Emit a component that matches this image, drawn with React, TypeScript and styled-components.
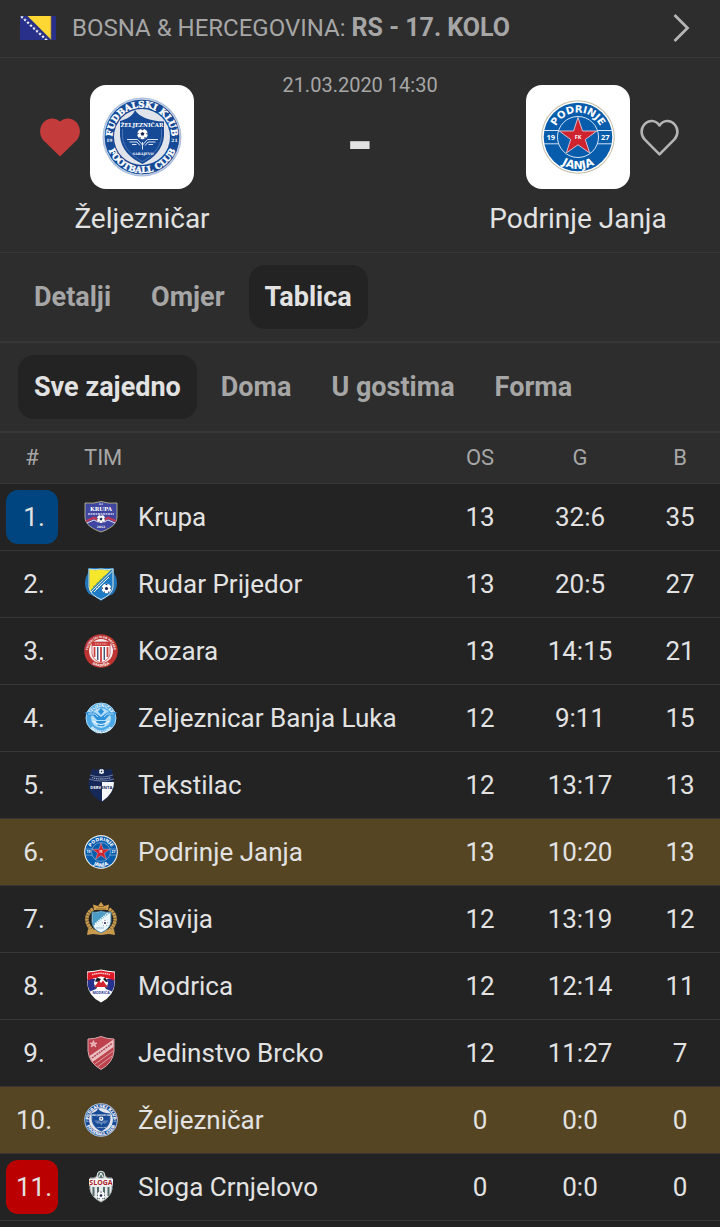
import { useId, useState } from "react";
import type { ReactNode } from "react";
import styled, { createGlobalStyle, css } from "styled-components";

const color = {
  panel: "#2d2d2d",
  body: "#232323",
  line: "#373737",
  text: "#e2e2e2",
  muted: "#a6a6a6",
  highlight: "#554522",
  promotion: "#00457f",
  relegation: "#ba0000",
  heart: "#c43b3b",
};

const GlobalStyle = createGlobalStyle`
  *, *::before, *::after { box-sizing: border-box; }
  body {
    margin: 0;
    background: ${color.body};
    color: ${color.text};
    font-family: Roboto, "Liberation Sans", sans-serif;
  }
  button { font: inherit; color: inherit; border: 0; padding: 0; background: none; cursor: pointer; }
`;

const Page = styled.main`
  width: 100%;
`;

const LeagueLink = styled.a`
  display: flex;
  align-items: center;
  gap: 16px;
  height: 58px;
  padding: 0 30px 2px 20px;
  border-bottom: 1px solid ${color.line};
  background: ${color.panel};
  color: ${color.muted};
  font-size: 24px;
  line-height: 32px;
  text-transform: uppercase;
  text-decoration: none;
  svg { flex: none; }
`;

const LeagueName = styled.span`
  flex: 1;
  white-space: nowrap;
  b { font-size: 25px; font-weight: 700; }
`;

const MatchHeader = styled.header`
  display: grid;
  grid-template-columns: minmax(0, 1fr) 152px minmax(0, 1fr);
  height: 195px;
  padding-top: 27px;
  border-bottom: 1px solid ${color.line};
  background: ${color.panel};
`;

const Team = styled.section`
  display: grid;
  grid-template-columns: 1fr 104px 1fr;
  grid-template-rows: 104px 32px;
  align-content: start;
  align-items: center;
  column-gap: 10px;
  row-gap: 14px;
`;

const TeamLogo = styled.div`
  grid-column: 2;
  grid-row: 1;
  display: grid;
  place-items: center;
  height: 104px;
  border-radius: 16px;
  background: #fff;
`;

const FavouriteButton = styled.button<{ $side: "left" | "right" }>`
  grid-column: ${(p) => (p.$side === "left" ? 1 : 3)};
  grid-row: 1;
  justify-self: ${(p) => (p.$side === "left" ? "end" : "start")};
  display: block;
  line-height: 0;
`;

const TeamName = styled.h2`
  grid-column: 1 / -1;
  margin: 0;
  text-align: center;
  font-size: 28px;
  font-weight: 400;
  line-height: 32px;
`;

const MatchCentre = styled.div`
  display: flex;
  flex-direction: column;
  align-items: center;
  margin-top: -12px;
`;

const Kickoff = styled.time`
  color: ${color.muted};
  font-size: 20px;
  line-height: 24px;
  white-space: nowrap;
`;

const Score = styled.span`
  margin-top: 10px;
  font-size: 70px;
  font-weight: 700;
  line-height: 72px;
`;

const TabBar = styled.nav`
  display: flex;
  gap: 8px;
  height: 90px;
  padding: 12px 18px;
  border-bottom: 2px solid ${color.line};
  background: ${color.panel};
`;

const Tab = styled.button<{ $active: boolean }>`
  height: 64px;
  padding: 0 16px;
  border-radius: 16px;
  color: ${color.muted};
  font-size: 27px;
  font-weight: 700;
  line-height: 32px;
  white-space: nowrap;
  ${(p) => p.$active && css`background: ${color.body}; color: ${color.text};`}
`;

const Standings = styled.table`
  width: 100%;
  table-layout: fixed;
  border-collapse: separate;
  border-spacing: 0;
  font-size: 26px;
  line-height: 32px;
`;

const HeadCell = styled.th<{ $width?: number; $align?: "left" | "center"; $pad?: number }>`
  width: ${(p) => (p.$width ? `${p.$width}px` : "auto")};
  height: 51px;
  padding: 0 0 0 ${(p) => p.$pad ?? 0}px;
  border-bottom: 1px solid ${color.line};
  background: ${color.panel};
  color: ${color.muted};
  font-size: 22px;
  font-weight: 400;
  text-align: ${(p) => p.$align ?? "center"};
`;

const Row = styled.tr<{ $highlight: boolean }>`
  background: ${(p) => (p.$highlight ? color.highlight : color.body)};
`;

const Cell = styled.td<{ $pad?: number }>`
  height: 67px;
  padding: 0 0 0 ${(p) => p.$pad ?? 0}px;
  border-bottom: 1px solid ${color.line};
  text-align: center;
  white-space: nowrap;
`;

const Rank = styled.span<{ $background?: string }>`
  display: flex;
  align-items: center;
  justify-content: center;
  width: 52px;
  height: 54px;
  margin: 0 auto;
  padding-left: 4px;
  border-radius: 12px;
  background: ${(p) => p.$background ?? "transparent"};
`;

const Club = styled.span`
  display: flex;
  align-items: center;
  gap: 20px;
  svg { flex: none; }
`;

const SERIF = '"DejaVu Serif", serif';
const SANS = '"Open Sans", sans-serif';
const WIDE = '"DejaVu Sans", sans-serif';

function Flag() {
  const stars = Array.from({ length: 9 }, (_, i) => i);
  return (
    <svg width="36" height="24" viewBox="0 0 36 24" aria-hidden="true">
      <rect width="36" height="24" fill="#29308a" />
      <path d="M7.5 0H31V23.6Z" fill="#fdd835" />
      <path d="M31.200 0V24" stroke="#6b5a55" strokeWidth=".8" />
      {stars.map((i) => (
        <path
          key={i}
          transform={`translate(${2 + i * 3} ${1 + i * 2.8})`}
          d="M0-1.8.5-.5 1.8-.4.8.5 1.1 1.7 0 1-1.1 1.7-.8.5-1.8-.4-.5-.5Z"
          fill="#f2f3fa"
        />
      ))}
    </svg>
  );
}

function Heart({ filled }: { filled: boolean }) {
  return (
    <svg width="40" height="40" viewBox="0 0 40 40" aria-hidden="true">
      {filled ? (
        <path d="M20 39.500 3.600 23.500C-1 18.800-1.100 10.300 3.400 5.400 7.900.5 15.300.2 20 4.500 24.700.2 32.100.5 36.600 5.400 41.100 10.300 41 18.800 36.400 23.500Z" fill={color.heart} />
      ) : (
        <path
          d="M19.500 37.300 4.600 22.300C.7 18.300.6 11.800 4.300 7.500 8.500 2.700 15.700 2.800 19.500 8.500 23.300 2.800 30.500 2.700 34.700 7.500 38.400 11.800 38.300 18.300 34.400 22.300Z"
          fill="none"
          stroke="#b4b4b4"
          strokeWidth="2.600"
          strokeLinejoin="round"
        />
      )}
    </svg>
  );
}

function Chevron() {
  return (
    <svg width="18" height="30" viewBox="0 0 18 30" fill="none" aria-hidden="true">
      <path d="M2.500 2 15.500 15 2.500 28" stroke="#b4b4b4" strokeWidth="2.800" />
    </svg>
  );
}

function Ball({ x, y, r }: { x: number; y: number; r: number }) {
  return (
    <g transform={`translate(${x} ${y}) scale(${r / 5})`}>
      <circle r="5" fill="#fff" />
      <path d="M0-1.900 1.800-.6 1.100 1.500H-1.100L-1.800-.6Z" fill="#1b2b55" />
      <path d="M-1.500-4.700H1.500L0-3.400ZM4.800-1.300 4.900 1 3.400-.6ZM-4.800-1.300-4.900 1-3.400-.6ZM3.400 3.600 1.600 4.700 1.900 2.800ZM-3.400 3.600-1.600 4.700-1.900 2.800Z" fill="#1b2b55" />
    </g>
  );
}

function ZeljeznicarCrest({ size }: { size: number }) {
  const id = useId();
  return (
    <svg width={size} height={size} viewBox="0 0 80 80" aria-hidden="true">
      <defs>
        <path id={`${id}t`} d="M10.500 40A29.500 29.500 0 0 1 69.500 40" />
        <path id={`${id}b`} d="M4 40A36 36 0 0 0 76 40" />
      </defs>
      <circle cx="40" cy="40" r="39.500" fill="#a9bddb" />
      <circle cx="40" cy="40" r="37.800" fill="#174a96" stroke="#fff" strokeWidth=".6" />
      <circle cx="40" cy="40" r="28" fill="#e1e4ea" />
      <path d="M33 13C37 20 48 24 62 24.500V39C61 52 52 61 40.500 67 28 61 19 52 18 39V24C25 22 31 19 33 13Z" fill="#174a96" />
      <path d="M20.500 32V40C21.500 51 30 59 40.500 64.500 50 59 58.500 51 59.500 40V32" fill="none" stroke="#6e90c4" strokeWidth=".6" />
      <g fill="#fff" fontWeight="700" textAnchor="middle" fontFamily={SERIF}>
        <g fontSize="8.800" stroke="#fff" strokeWidth=".4">
          <text><textPath href={`#${id}t`} startOffset="50%">FUDBALSKI KLUB</textPath></text>
          <text><textPath href={`#${id}b`} startOffset="50%">FOOTBALL CLUB</textPath></text>
        </g>
        <text x="40" y="29.800" fontSize="5.400">ŽELJEZNIČAR</text>
        <text x="41" y="58" fontSize="3.500">SARAJEVO</text>
        <text x="7.300" y="45" fontSize="4.500">19</text>
        <text x="72.500" y="45" fontSize="4.500">21</text>
      </g>
      <Ball x={40.500} y={37} r={5.300} />
      <path d="M25 42.500H35.500L40.500 48 45.500 42.500H56M27.500 45H35L38 48.500M53.500 45H46L43 48.500M30 47.500H34.500M51 47.500H46.500M40.500 45V52.500" fill="none" stroke="#dbe4f2" strokeWidth="1" />
    </svg>
  );
}

function PodrinjeCrest({ size }: { size: number }) {
  const id = useId();
  return (
    <svg width={size} height={size} viewBox="0 0 74 74" aria-hidden="true">
      <defs>
        <path id={`${id}t`} d="M12.500 37A24.500 24.500 0 0 1 61.500 37" />
        <path id={`${id}b`} d="M5 37A32 32 0 0 0 69 37" />
      </defs>
      <circle cx="37" cy="37" r="36.800" fill="#c5bda9" />
      <circle cx="37" cy="37" r="35.800" fill="#fff" />
      <circle cx="37" cy="37" r="34.300" fill="#075cac" />
      <path d="M3 30.500H71M3 43.800H71" stroke="#d3e3f4" />
      <circle cx="37" cy="37" r="20.500" fill="#075cac" stroke="#d3e3f4" />
      <path d="M37 17.500 41.500 31H55.800L44.300 39.500 48.700 53 37 44.800 25.300 53 29.700 39.500 18.200 31H32.500Z" fill="#cf2330" stroke="#e4cbd6" strokeWidth=".9" />
      <g fill="#fff" fontWeight="700" textAnchor="middle">
        <g fontFamily={WIDE}>
          <text fontSize="10"><textPath href={`#${id}t`} startOffset="50%">PODRINJE</textPath></text>
          <text fontSize="11"><textPath href={`#${id}b`} startOffset="50%">JANJA</textPath></text>
        </g>
        <g fontFamily={SANS}>
          <text x="9.800" y="39.800" fontSize="7.500">19</text>
          <text x="64.200" y="39.800" fontSize="7.500">27</text>
          <text x="37" y="39.300" fontSize="5.500">FK</text>
        </g>
      </g>
    </svg>
  );
}

function Crest({ children }: { children: ReactNode }) {
  return (
    <svg width="34" height="34" viewBox="0 0 34 34" aria-hidden="true">
      {children}
    </svg>
  );
}

function KrupaCrest() {
  return (
    <Crest>
      <path d="M1 3Q9 4 17 1.500 25 4 33 3V17C33 25 25 29 17 32 9 29 1 25 1 17Z" fill="#4046a0" stroke="#aaa98e" />
      <g fill="#fff" fontWeight="700" textAnchor="middle" fontFamily={SERIF}>
        <text x="17" y="11" fontSize="5.500">KRUPA</text>
        <text x="17" y="27.500" fontSize="3">2012</text>
      </g>
      <path d="M4 14H30M15 4.200H19" stroke="#c9cbea" strokeWidth="1.300" strokeDasharray="2 .5" />
      <path d="M2 20 10 16.500 17 20 24 16.500 32 20V22L24 19 17 23 10 19 2 22Z" fill="#c43750" />
      <path d="M3 23 10 20 14 22M31 23 24 20 20 22" stroke="#dfe0f2" fill="none" />
      <Ball x={17} y={19} r={4} />
    </Crest>
  );
}

function RudarCrest() {
  return (
    <Crest>
      <path d="M4 1 30 1Q29 6 32 10 35 20 29 27 23 29 17 34 11 29 5 27-1 20 2 10 5 6 4 1Z" fill="#2374b7" />
      <path d="M5 2Q11 3.500 17 2 23 3.500 29 2V20Q28 28 17 32.500 6 28 5 20Z" fill="#1e7bc5" stroke="#d5e7e6" />
      <path d="M5.500 2.500Q11 4 17 2.500 22 4 27 2.800L6 24Q5.500 22 5.500 20Z" fill="#f5e82c" />
      <path d="M7 25 28.500 4M10 25 25 10" stroke="#f3f4d2" strokeWidth="1" />
      <path d="M9 20 21 8.500" stroke="#4f7960" strokeDasharray="1 1" />
      <path d="M12 22 20 15" stroke="#d8e8f4" strokeDasharray="1.500 1" />
      <Ball x={22.500} y={21.500} r={4.800} />
    </Crest>
  );
}

function KozaraCrest() {
  const id = useId();
  return (
    <Crest>
      <defs>
        <path id={`${id}t`} d="M4 17A13 13 0 0 1 30 17" />
        <path id={`${id}b`} d="M1.500 17A15.500 15.500 0 0 0 32.500 17" />
      </defs>
      <circle cx="17" cy="17" r="16.800" fill="#bd3433" />
      <circle cx="17" cy="17" r="12" fill="#f5eeee" />
      <g fill="#fff" fontWeight="700" textAnchor="middle" fontFamily={SANS} fontSize="3.600">
        <text fontSize="3"><textPath href={`#${id}t`} startOffset="50%">FUDBALSKI KLUB KOZARA</textPath></text>
        <text><textPath href={`#${id}b`} startOffset="50%">GRADIŠKA</textPath></text>
      </g>
      <path d="M8 8H26V20Q25 26 17 29 9 26 8 20Z" fill="#fff" stroke="#c74140" strokeWidth=".8" />
      <path d="M8 8H26V12H8Z" fill="#c93b3a" />
      <path d="M10.500 13V23M17 13V28M23.500 13V23" stroke="#ca3e3c" strokeWidth="1.800" />
      <path d="M13.700 13V26M20.300 13V26" stroke="#435879" strokeWidth="1.500" />
      <path d="M11 10H23" stroke="#f0b8b7" strokeDasharray="1.500 .8" />
    </Crest>
  );
}

function BanjaLukaCrest() {
  const id = useId();
  return (
    <Crest>
      <defs>
        <path id={`${id}t`} d="M6 17A11 11 0 0 1 28 17" />
        <path id={`${id}b`} d="M3 18A14 14 0 0 0 31 18" />
      </defs>
      <circle cx="17" cy="17" r="15" fill="#4ba7e5" stroke="#a9dbf8" />
      <circle cx="17" cy="17" r="10" fill="#b4def6" />
      <g fill="#fff" fontWeight="700" textAnchor="middle" fontFamily={SANS} fontSize="4">
        <text><textPath href={`#${id}t`} startOffset="50%">ŽELJEZNIČAR</textPath></text>
        <text><textPath href={`#${id}b`} startOffset="50%">BANJA LUKA</textPath></text>
      </g>
      <path d="M.5 11.500H11L17 16 23 11.500H33.500L30 14.500H25L21 19H13L9 14.500H4Z" fill="#2c91db" />
      <path d="M4 13H11L14 16M30 13H23L20 16" stroke="#d9effc" fill="none" strokeWidth=".8" />
      <path d="M14 10.500 17 7 20 10.500 17 14ZM12 20H22L20 25H14Z" fill="#2c91db" />
      <path d="M9 20Q17 27 25 20" stroke="#fff" fill="none" />
    </Crest>
  );
}

function TekstilacCrest() {
  return (
    <Crest>
      <path d="M8 1 13 2 17 0 21 2 28 1 29 12Q32 25 18 34 2 25 5 12Z" fill="#162858" />
      <path d="M18 14H30Q30.500 25 18 33.500Z" fill="#f4f6fa" />
      <path d="M6 7Q17 11 29 7M5 11Q17 15 30 11" stroke="#8290b2" strokeWidth=".8" fill="none" />
      <path d="M8 9.500Q17 12.500 27 9.500" stroke="#a3adca" strokeWidth="1.300" strokeDasharray="1.300 .8" fill="none" />
      <Ball x={17.500} y={3.500} r={2.500} />
      <text x="17.300" y="20.500" textAnchor="middle" fontFamily={SANS} fontWeight="700" fontSize="4.200">
        <tspan fill="#fff">DERV</tspan>
        <tspan fill="#162858">ENTA</tspan>
      </text>
    </Crest>
  );
}

function SlavijaCrest() {
  return (
    <Crest>
      <path d="M9 7Q1 12 3.500 21 6 28 12 30M25 7Q33 12 30.500 21 28 28 22 30" fill="none" stroke="#c79a4d" strokeWidth="3.600" strokeDasharray="2.500 .4" />
      <path d="M4 27 10 28 17 30 24 28 30 27 31 33 25 32 17 33 9 32 3 33Z" fill="#c79a4d" />
      <path d="M10 8 9 2.500 14 4 17 0 20 4 25 2.500 24 8Z" fill="#cf9f4d" />
      <path d="M12 7H22M14 4.500H20" stroke="#815d25" strokeWidth=".8" />
      <path d="M8 10Q12 11 17 9 22 11 27 10V20Q26 27 17 31 8 27 8 20Z" fill="#eaf5fa" stroke="#467f9b" />
      <path d="M8.500 10.500Q12 11.500 17 9.500 22 11.500 26.500 10.500L9 24Z" fill="#4a9cc7" />
      <path d="M11 22 24 11" stroke="#fff" strokeWidth="1.500" strokeDasharray="1.500 .7" />
      <Ball x={21} y={21} r={3} />
      <path d="M12 26H20" stroke="#94bfd5" />
    </Crest>
  );
}

function ModricaCrest() {
  return (
    <Crest>
      <path d="M3 2.500Q11 2 17 .5 23 2 31 2.500V14Q30 27 17 33.500 4 27 3 14Z" fill="#fff" />
      <path d="M3.500 10 30.500 10V15Q30 19 28 22.500L22 20H12L6 22.500Q4 19 3.500 15Z" fill="#26318d" />
      <path d="M3.500 3.500Q11 3 17 1.500 23 3 30.500 3.500V11.500Q23 8.500 17 8.500 11 8.500 3.500 11.500Z" fill="#df1826" />
      <path d="M8 5.500Q17 3.200 26 5.500" stroke="#ffd6d7" fill="none" strokeWidth="1.500" strokeDasharray="1.500 .6" />
      <circle cx="17" cy="14.500" r="7" fill="#fff" />
      <path d="M13 8.500 17 10 15 13 11 12.500ZM21 8.500 19 10 22 13 24 12.500ZM10 15 13 18 12 20ZM24 15 21 18 22 20Z" fill="#191b27" />
      <path d="M10.500 18 15 11.500 17 14 19 11.500 23.500 18Z" fill="#d52431" />
      <text x="17" y="25" fontSize="3.600" fontWeight="700" textAnchor="middle" fontFamily={SANS} fill="#26318d">MODRIČA</text>
    </Crest>
  );
}

function JedinstvoCrest() {
  return (
    <Crest>
      <path d="M4 3Q11 3 17 .5 23 3 30 3V15Q29 27 17 33.500 5 27 4 15Z" fill="#be424e" stroke="#dba8ad" />
      <path d="M5.500 20 29.500 3.500V11L8.500 26Z" fill="#e9bfc2" />
      <path d="M8 22 28 7.500" stroke="#b24651" strokeWidth="1.500" strokeDasharray="2 .8" />
      <path d="M11 28 29 15M14 30.500 28 20" stroke="#daa0a5" />
      <path d="M9.500 4.500 10.500 7H13L11 8.500 12 11 9.500 9.500 7 11 8 8.500 6 7H8.500Z" fill="#e7a5aa" stroke="#fff" strokeWidth=".4" />
    </Crest>
  );
}

function SlogaCrest() {
  return (
    <Crest>
      <path d="M6 8Q11 9 13 6L14 3Q17 0 20 3L21 6Q23 9 28 8V19Q27 27 17 32 7 27 6 19Z" fill="#e6eaea" stroke="#a4adae" />
      <path d="M9.500 17V26M14 17V29M20 17V29M24.500 17V26" stroke="#55696a" strokeWidth="2" />
      <circle cx="17" cy="5" r="3.800" fill="#5c7270" stroke="#d9e2e1" />
      <path d="M15 7 17 3 19 7" stroke="#fff" fill="none" />
      <rect x="5" y="9" width="24" height="6.500" fill="#f7f5f5" />
      <text x="17" y="14.800" fontSize="7" fontWeight="700" textAnchor="middle" fontFamily={SANS} fill="#a91f2c">SLOGA</text>
      <Ball x={17} y={25.500} r={4} />
    </Crest>
  );
}

interface Standing {
  name: string;
  crest: ReactNode;
  played: number;
  goals: string;
  points: number;
  highlight?: boolean;
  rankColor?: string;
}

const standings: Standing[] = [
  { name: "Krupa", crest: <KrupaCrest />, played: 13, goals: "32:6", points: 35, rankColor: color.promotion },
  { name: "Rudar Prijedor", crest: <RudarCrest />, played: 13, goals: "20:5", points: 27 },
  { name: "Kozara", crest: <KozaraCrest />, played: 13, goals: "14:15", points: 21 },
  { name: "Zeljeznicar Banja Luka", crest: <BanjaLukaCrest />, played: 12, goals: "9:11", points: 15 },
  { name: "Tekstilac", crest: <TekstilacCrest />, played: 12, goals: "13:17", points: 13 },
  { name: "Podrinje Janja", crest: <PodrinjeCrest size={34} />, played: 13, goals: "10:20", points: 13, highlight: true },
  { name: "Slavija", crest: <SlavijaCrest />, played: 12, goals: "13:19", points: 12 },
  { name: "Modrica", crest: <ModricaCrest />, played: 12, goals: "12:14", points: 11 },
  { name: "Jedinstvo Brcko", crest: <JedinstvoCrest />, played: 12, goals: "11:27", points: 7 },
  { name: "Željezničar", crest: <ZeljeznicarCrest size={34} />, played: 0, goals: "0:0", points: 0, highlight: true },
  { name: "Sloga Crnjelovo", crest: <SlogaCrest />, played: 0, goals: "0:0", points: 0, rankColor: color.relegation },
];

function Tabs({ label, items, initial }: { label: string; items: string[]; initial: string }) {
  const [active, setActive] = useState(initial);
  return (
    <TabBar aria-label={label}>
      {items.map((item) => (
        <Tab key={item} type="button" $active={item === active} aria-pressed={item === active} onClick={() => setActive(item)}>
          {item}
        </Tab>
      ))}
    </TabBar>
  );
}

function MatchTeam({ name, crest, side, favourite }: { name: string; crest: ReactNode; side: "left" | "right"; favourite: boolean }) {
  const [liked, setLiked] = useState(favourite);
  return (
    <Team>
      <FavouriteButton type="button" $side={side} aria-label={name} aria-pressed={liked} onClick={() => setLiked(!liked)}>
        <Heart filled={liked} />
      </FavouriteButton>
      <TeamLogo>{crest}</TeamLogo>
      <TeamName>{name}</TeamName>
    </Team>
  );
}

export default function App() {
  return (
    <Page>
      <GlobalStyle />
      <LeagueLink href="#kolo">
        <Flag />
        <LeagueName>
          Bosna &amp; Hercegovina: <b>RS - 17. kolo</b>
        </LeagueName>
        <Chevron />
      </LeagueLink>
      <MatchHeader>
        <MatchTeam name="Željezničar" crest={<ZeljeznicarCrest size={80} />} side="left" favourite />
        <MatchCentre>
          <Kickoff dateTime="2020-03-21T14:30">21.03.2020 14:30</Kickoff>
          <Score>-</Score>
        </MatchCentre>
        <MatchTeam name="Podrinje Janja" crest={<PodrinjeCrest size={74} />} side="right" favourite={false} />
      </MatchHeader>
      <Tabs label="Utakmica" items={["Detalji", "Omjer", "Tablica"]} initial="Tablica" />
      <Tabs label="Tablica" items={["Sve zajedno", "Doma", "U gostima", "Forma"]} initial="Sve zajedno" />
      <Standings>
        <thead>
          <tr>
            <HeadCell $width={64}>#</HeadCell>
            <HeadCell $align="left" $pad={20}>TIM</HeadCell>
            <HeadCell $width={100}>OS</HeadCell>
            <HeadCell $width={100}>G</HeadCell>
            <HeadCell $width={90} $pad={10}>B</HeadCell>
          </tr>
        </thead>
        <tbody>
          {standings.map((team, index) => (
            <Row key={team.name} $highlight={Boolean(team.highlight)}>
              <Cell><Rank $background={team.rankColor}>{index + 1}.</Rank></Cell>
              <Cell $pad={20}><Club>{team.crest}{team.name}</Club></Cell>
              <Cell>{team.played}</Cell>
              <Cell>{team.goals}</Cell>
              <Cell $pad={10}>{team.points}</Cell>
            </Row>
          ))}
        </tbody>
      </Standings>
    </Page>
  );
}
